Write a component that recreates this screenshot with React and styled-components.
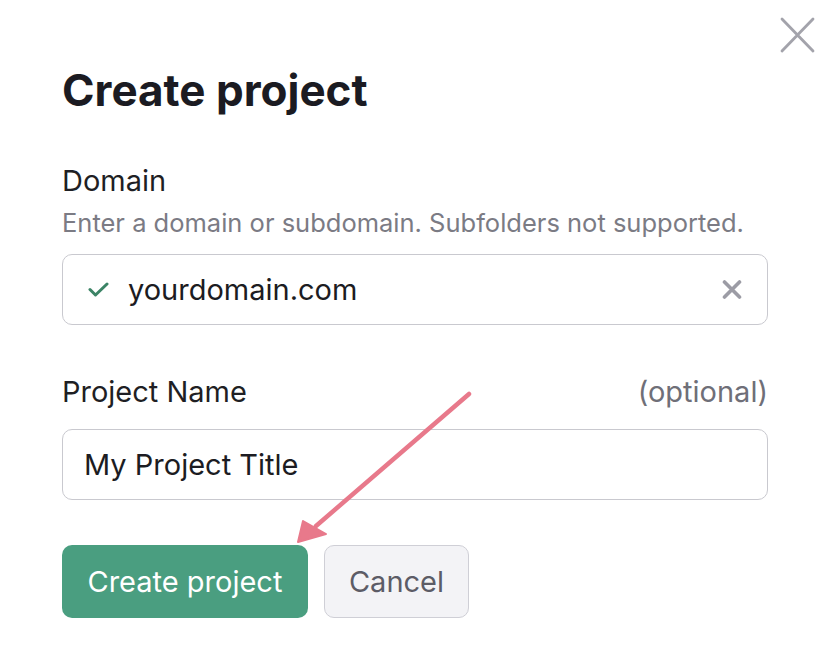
import React from "react";
import styled, { createGlobalStyle } from "styled-components";

const GlobalStyle = createGlobalStyle`
  html, body {
    margin: 0;
    padding: 0;
    background: #ffffff;
  }
  body {
    font-family: Inter, "Noto Sans", sans-serif;
    color: #1f1f24;
  }
`;

const Dialog = styled.div`
  position: relative;
  width: 835px;
  height: 656px;
  box-sizing: border-box;
  padding: 63px 67px 0 62px;
  display: flex;
  flex-direction: column;
  background: #ffffff;
`;

const CloseButton = styled.button`
  position: absolute;
  top: 16px;
  left: 779px;
  width: 37px;
  height: 38px;
  padding: 0;
  border: none;
  background: transparent;
  display: flex;
  align-items: center;
  justify-content: center;
`;

const Title = styled.h1`
  margin: 0;
  font-size: 44px;
  line-height: 54px;
  font-weight: 700;
  color: #1b1b22;
`;

const Field = styled.div`
  display: flex;
  flex-direction: column;
  margin-top: ${(p) => p.$top}px;
`;

const LabelRow = styled.div`
  display: flex;
  justify-content: space-between;
  align-items: baseline;
`;

const Label = styled.label`
  font-size: 29px;
  line-height: 36px;
  color: #1f1f24;
`;

const Optional = styled.span`
  font-size: 29px;
  line-height: 36px;
  color: #6f6f78;
`;

const Hint = styled.div`
  margin-top: 7px;
  font-size: 25.5px;
  line-height: 34px;
  color: #7b7b84;
`;

const InputBox = styled.div`
  margin-top: ${(p) => p.$gap}px;
  height: 71px;
  box-sizing: border-box;
  border: 1.5px solid #c9c9cf;
  border-radius: 10px;
  display: flex;
  align-items: center;
  padding: 0 25px 0 ${(p) => p.$padLeft}px;
  gap: 19px;
`;

const InputText = styled.span`
  flex: 1;
  font-size: 29px;
  color: #1c1c22;
`;

const Actions = styled.div`
  display: flex;
  gap: 16px;
  margin-top: 45px;
`;

const Button = styled.button`
  height: 73px;
  box-sizing: border-box;
  padding: 0 ${(p) => (p.$primary ? 25.5 : 24)}px;
  border-radius: 10px;
  font-family: Inter, "Noto Sans", sans-serif;
  font-size: 29px;
  border: ${(p) => (p.$primary ? "none" : "1.5px solid #cfcfd6")};
  background: ${(p) => (p.$primary ? "#4a9e80" : "#f3f3f6")};
  color: ${(p) => (p.$primary ? "#ffffff" : "#5c5c66")};
`;

const Arrow = styled.svg`
  position: absolute;
  left: 290px;
  top: 385px;
  pointer-events: none;
`;

const CheckIcon = () => (
  <svg width="21" height="15" viewBox="0 0 21 15" fill="none">
    <path d="M2 7.5l5.5 5.5L19 2" stroke="#3c8466" strokeWidth="3" strokeLinecap="round" strokeLinejoin="round" />
  </svg>
);

const ClearIcon = () => (
  <svg width="20" height="19" viewBox="0 0 20 19" fill="none">
    <path d="M2.5 2l15 15M17.5 2l-15 15" stroke="#9c9ca5" strokeWidth="3.6" strokeLinecap="round" />
  </svg>
);

const App = () => {
  return (
    <>
      <GlobalStyle />
      <Dialog>
        <CloseButton aria-label="Close">
          <svg width="37" height="38" viewBox="0 0 37 38" fill="none">
            <path d="M3 3l31 32M34 3L3 35" stroke="#a3a3ab" strokeWidth="2.8" strokeLinecap="round" />
          </svg>
        </CloseButton>

        <Title>Create project</Title>

        <Field $top={46}>
          <Label>Domain</Label>
          <Hint>Enter a domain or subdomain. Subfolders not supported.</Hint>
          <InputBox $gap={14} $padLeft={25}>
            <CheckIcon />
            <InputText>yourdomain.com</InputText>
            <ClearIcon />
          </InputBox>
        </Field>

        <Field $top={49}>
          <LabelRow>
            <Label>Project Name</Label>
            <Optional>(optional)</Optional>
          </LabelRow>
          <InputBox $gap={19} $padLeft={21}>
            <InputText>My Project Title</InputText>
          </InputBox>
        </Field>

        <Actions>
          <Button $primary>Create project</Button>
          <Button>Cancel</Button>
        </Actions>

        <Arrow width="190" height="165" viewBox="0 0 190 165">
          <path d="M179 9L26 141" stroke="#e8798b" strokeWidth="4.5" strokeLinecap="round" />
          <path d="M8 157L13 136L36 149Z" fill="#e8798b" stroke="#e8798b" strokeWidth="2" strokeLinejoin="round" />
        </Arrow>
      </Dialog>
    </>
  );
};

export default App;
